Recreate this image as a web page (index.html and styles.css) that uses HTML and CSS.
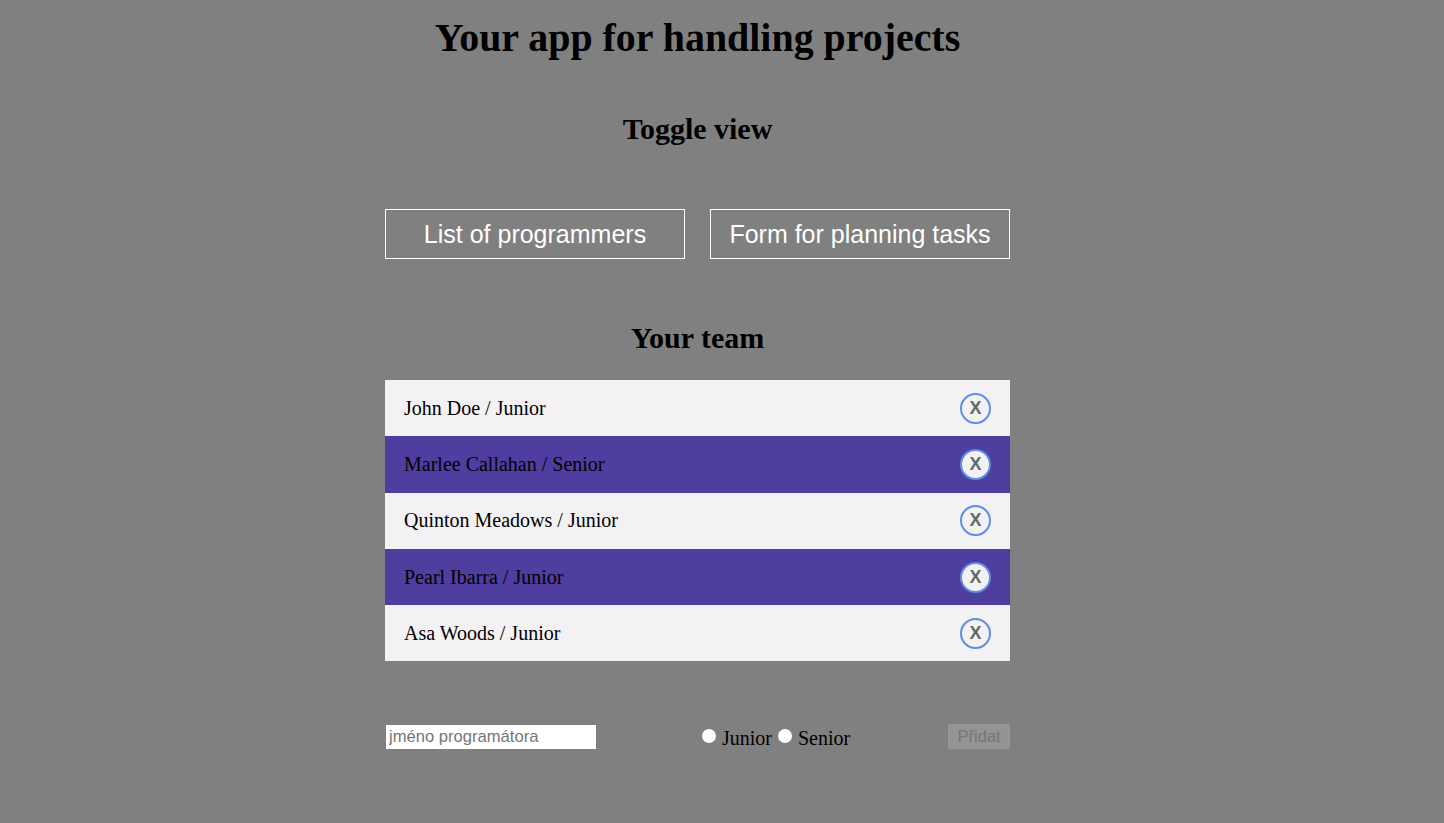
FILE: index.html
```html
<!DOCTYPE html>
<html lang="en">
<head>
  <meta charset="UTF-8">
  <title>Your app for handling projects</title>
  <link rel="stylesheet" href="styles.css">
</head>
<body>
  <div class="app">
    <h1>Your app for handling projects</h1>

    <h2 class="toggle-title">Toggle view</h2>
    <div class="toggle">
      <button class="toggle-btn" type="button">List of programmers</button>
      <button class="toggle-btn" type="button">Form for planning tasks</button>
    </div>

    <h2 class="team-title">Your team</h2>
    <ul class="team">
      <li class="member"><span>John Doe / Junior</span><button class="remove" type="button">X</button></li>
      <li class="member"><span>Marlee Callahan / Senior</span><button class="remove" type="button">X</button></li>
      <li class="member"><span>Quinton Meadows / Junior</span><button class="remove" type="button">X</button></li>
      <li class="member"><span>Pearl Ibarra / Junior</span><button class="remove" type="button">X</button></li>
      <li class="member"><span>Asa Woods / Junior</span><button class="remove" type="button">X</button></li>
    </ul>

    <form class="add-form">
      <input class="name-input" type="text" placeholder="jméno programátora">
      <div class="levels">
        <input type="radio" name="level" id="junior"><label for="junior">Junior</label>
        <input type="radio" name="level" id="senior"><label for="senior">Senior</label>
      </div>
      <button class="add-btn" type="submit" disabled>Přidat</button>
    </form>
  </div>
</body>
</html>
```

FILE: styles.css
```css
body {
  margin: 0;
  min-height: 823px;
  background-color: #808080;
  font-family: "Liberation Serif", serif;
  color: #000;
}

.app {
  width: 625px;
  margin-left: 385px;
}

h1 {
  margin: 0;
  padding-top: 15px;
  font-size: 39.9px;
  line-height: 46px;
  text-align: center;
  white-space: nowrap;
}

h2 {
  margin: 0;
  font-size: 30px;
  line-height: 33px;
  text-align: center;
}

.toggle-title {
  margin-top: 51px;
}

.toggle {
  display: flex;
  justify-content: space-between;
  margin-top: 64px;
}

.toggle-btn {
  width: 300px;
  height: 50px;
  padding: 0;
  background: transparent;
  border: 1px solid #fff;
  color: #fff;
  font-family: "Liberation Sans", sans-serif;
  font-size: 25px;
}

.team-title {
  margin-top: 62px;
}

.team {
  list-style: none;
  margin: 26px 0 0;
  padding: 0;
}

.member {
  box-sizing: border-box;
  display: flex;
  align-items: center;
  justify-content: space-between;
  height: 56.25px;
  padding: 0.3px 19px 0;
  background-color: #f3f1f3;
  font-size: 20px;
}

.member:nth-child(even) {
  background-color: #4f3da0;
}

.remove {
  width: 31px;
  height: 31px;
  padding: 0;
  background-color: #f3f1f3;
  border: 2px solid #5b8fe6;
  border-radius: 50%;
  color: #5f6b66;
  font-family: "Liberation Sans", sans-serif;
  font-size: 18px;
  font-weight: bold;
}

.add-form {
  display: flex;
  align-items: center;
  justify-content: space-between;
  margin-top: 63px;
}

.name-input {
  box-sizing: border-box;
  width: 212px;
  height: 26px;
  padding: 1px 3px;
  background-color: #fff;
  border: 1px solid #808080;
  font-family: "Liberation Sans", sans-serif;
  font-size: 16.6px;
}

.levels {
  display: flex;
  align-items: center;
  margin-left: 105px;
  font-size: 20px;
}

.levels input {
  width: 14px;
  height: 14px;
  margin: 0 6px 2px 0;
  appearance: none;
  background-color: #fff;
  border-radius: 50%;
}

.levels label {
  margin-right: 6px;
  margin-top: 3px;
}

.add-btn {
  width: 62px;
  height: 25px;
  padding: 0;
  margin-left: 92px;
  margin-bottom: 1px;
  background-color: #949494;
  border: 1px solid #989898;
  border-radius: 2px;
  color: #757575;
  font-family: "Liberation Sans", sans-serif;
  font-size: 16.5px;
}
```
